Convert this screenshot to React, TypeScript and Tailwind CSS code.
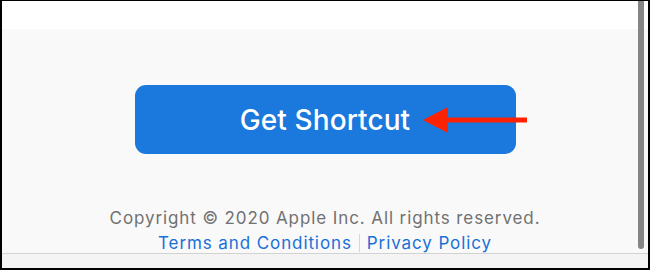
export default function App() {
  return (
    <div className="relative flex h-[270px] w-[650px] flex-col overflow-hidden border-t border-l-2 border-r-2 border-b-2 border-black bg-[#f9f9f9] font-['Inter','Noto_Sans',sans-serif]">
      <div className="h-[28px] shrink-0 bg-white" />

      <main className="flex flex-1 flex-col items-center pt-[56px]">
        <button className="relative flex h-[69px] w-[381px] items-center justify-center rounded-[11px] bg-[#1b78dc] text-[28px] font-medium tracking-[0.1px] text-white">
          Get Shortcut
          <svg
            className="absolute left-[288px] top-[22px]"
            width="104"
            height="26"
            viewBox="0 0 104 26"
          >
            <polygon points="0,13 25,0 25,26" fill="#ff2200" />
            <rect x="24" y="10.5" width="80" height="5" fill="#ff2200" />
          </svg>
        </button>

        <p className="mt-[53px] text-[17px] leading-[22px] tracking-[0.9px] text-[#717171]">
          Copyright © 2020 Apple Inc. All rights reserved.
        </p>
        <div className="mt-[4px] flex items-center text-[17px] leading-[20px] tracking-[0.9px] text-[#1a70d8]">
          <a href="#">Terms and Conditions</a>
          <span className="mx-[7px] h-[18px] w-px bg-[#d6d6d6]" />
          <a href="#">Privacy Policy</a>
        </div>
      </main>

      <div className="h-[15px] shrink-0 border-t border-[#d2d2d2] bg-[#f4f4f4]" />

      <div className="absolute right-[4px] top-0 h-[248px] w-[6px] rounded-b-full bg-[#858585]" />
    </div>
  );
}
